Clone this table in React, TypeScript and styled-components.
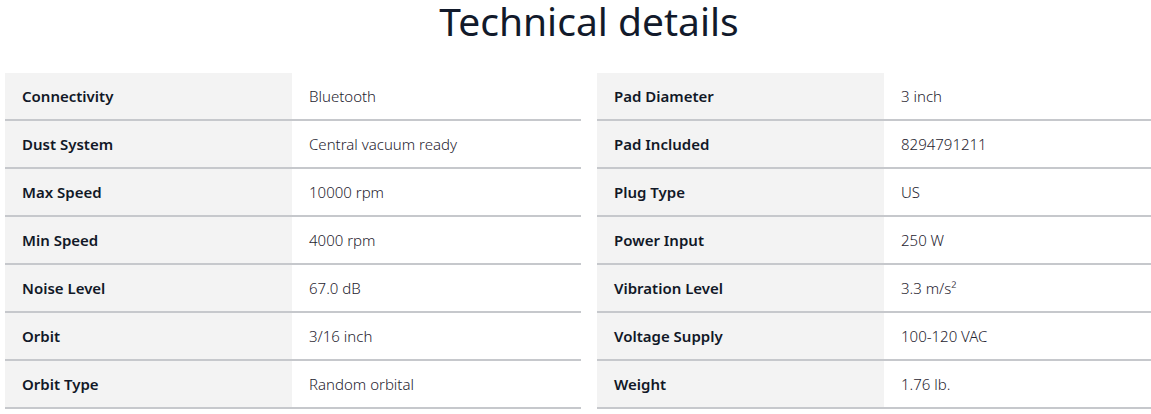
import styled, { createGlobalStyle } from 'styled-components'

const GlobalStyle = createGlobalStyle`
  html, body {
    margin: 0;
    padding: 0;
    background: #ffffff;
    overflow: hidden;
  }
  body {
    font-family: 'Noto Sans', 'Open Sans', sans-serif;
    color: #14192d;
  }
`

const Section = styled.section`
  width: 1168px;
  margin-left: 5px;
`

const Title = styled.h2`
  margin: 0 0 31px;
  font-size: 39px;
  line-height: 42px;
  font-weight: 400;
  text-align: center;
  color: #121a2b;
`

const Columns = styled.div`
  display: grid;
  grid-template-columns: 1fr 1fr;
  column-gap: 16px;
`

const Table = styled.div`
  display: flex;
  flex-direction: column;
`

const Row = styled.div`
  display: grid;
  grid-template-columns: 287px 1fr;
  height: 48px;
  border-bottom: 2px solid #c6c8cc;
  box-sizing: border-box;
`

const Label = styled.div`
  display: flex;
  align-items: center;
  padding-left: 17px;
  background: #f3f3f3;
  font-size: 15px;
  font-weight: 650;
  color: #111827;
`

const Value = styled.div`
  display: flex;
  align-items: center;
  padding-left: 17px;
  font-size: 15px;
  font-weight: 300;
  color: #1f2430;
`

type Spec = [string, string]

const left: Spec[] = [
  ['Connectivity', 'Bluetooth'],
  ['Dust System', 'Central vacuum ready'],
  ['Max Speed', '10000 rpm'],
  ['Min Speed', '4000 rpm'],
  ['Noise Level', '67.0 dB'],
  ['Orbit', '3/16 inch'],
  ['Orbit Type', 'Random orbital'],
]

const right: Spec[] = [
  ['Pad Diameter', '3 inch'],
  ['Pad Included', '8294791211'],
  ['Plug Type', 'US'],
  ['Power Input', '250 W'],
  ['Vibration Level', '3.3 m/s²'],
  ['Voltage Supply', '100-120 VAC'],
  ['Weight', '1.76 lb.'],
]

const SpecTable = ({ rows }: { rows: Spec[] }) => (
  <Table>
    {rows.map(([label, value]) => (
      <Row key={label}>
        <Label>{label}</Label>
        <Value>{value}</Value>
      </Row>
    ))}
  </Table>
)

export default function App() {
  return (
    <>
      <GlobalStyle />
      <Section>
        <Title>Technical details</Title>
        <Columns>
          <SpecTable rows={left} />
          <SpecTable rows={right} />
        </Columns>
      </Section>
    </>
  )
}
